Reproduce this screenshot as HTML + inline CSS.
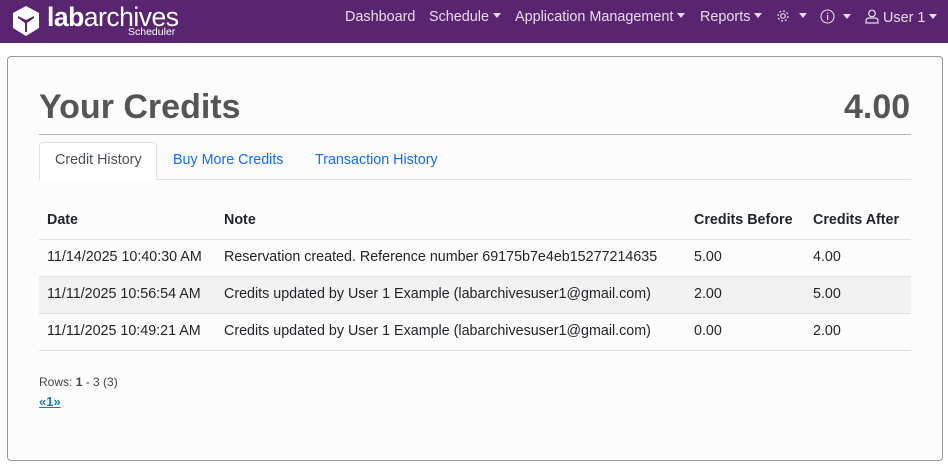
<!DOCTYPE html>
<html><head><style>
*{margin:0;padding:0;box-sizing:border-box}
body{width:948px;height:468px;background:#fff;font-family:"Liberation Sans",Arial,sans-serif;position:relative;overflow:hidden;color:#212529}
.nav{position:absolute;left:0;top:0;width:948px;height:43px;background:#5a2570}
.nav span{position:absolute;top:9px;color:#e6dcea;font-size:14.4px}
.car{display:inline-block;width:0;height:0;border-left:4px solid transparent;border-right:4px solid transparent;border-top:5px solid #e6dcea;vertical-align:3px;margin-left:4px}
.card{position:absolute;left:7px;top:56px;width:936px;height:405px;border:1px solid #999;border-radius:4px;background:#fcfcfc}
.a{position:absolute;white-space:nowrap}
.t{font-size:14.3px;color:#212529}
.line{position:absolute;left:39px;width:872px;height:1px;background:#dee2e6}
</style></head><body>
<div class="nav">
 <svg style="position:absolute;left:11px;top:5px" width="30" height="32" viewBox="0 0 30 32"><path d="M15 1 L28 8 L28 23 L15 31 L2 23 L2 8 Z" fill="#fff"/><path d="M7 11 L15 15 L23 11 L23 13 L16 18 L16 27 L14 27 L14 18 L7 13 Z" fill="#5a2570"/></svg>
 <div class="a" style="left:47px;top:2px;color:#fff;font-size:26.5px;letter-spacing:-0.5px"><b>lab</b>archives</div>
 <div class="a" style="left:128px;top:26px;color:#fff;font-size:10.5px">Scheduler</div>
 <span style="left:345px">Dashboard</span>
 <span style="left:429px">Schedule<i class="car"></i></span>
 <span style="left:515px">Application Management<i class="car"></i></span>
 <span style="left:700px">Reports<i class="car"></i></span>
 <span style="left:776px"><svg width="14" height="14" viewBox="0 0 14 14" style="vertical-align:-2px"><circle cx="7" cy="7" r="2.3" fill="none" stroke="#e6dcea" stroke-width="1.2"/><circle cx="7" cy="7" r="5" fill="none" stroke="#e6dcea" stroke-width="1.2" stroke-dasharray="2 1.9"/></svg><i class="car" style="margin-left:9px"></i></span>
 <span style="left:820px"><svg width="15" height="15" viewBox="0 0 15 15" style="vertical-align:-2px"><circle cx="7.5" cy="7.5" r="6.5" fill="none" stroke="#e6dcea" stroke-width="1.1"/><rect x="7" y="6" width="1.2" height="5" fill="#e6dcea"/><rect x="7" y="3.6" width="1.2" height="1.3" fill="#e6dcea"/></svg><i class="car" style="margin-left:8px"></i></span>
 <span style="left:865px"><svg width="14" height="15" viewBox="0 0 14 15" style="vertical-align:-2px"><circle cx="7" cy="4.5" r="3.3" fill="none" stroke="#e6dcea" stroke-width="1.2"/><path d="M1 14 V12 Q1 9 4 9 H10 Q13 9 13 12 V14 Z" fill="none" stroke="#e6dcea" stroke-width="1.2"/></svg> User 1<i class="car"></i></span>
</div>
<div class="card"></div>
<div class="a" style="left:39px;top:88px;font-size:34px;font-weight:bold;color:#555">Your Credits</div>
<div class="a" style="left:844px;top:88px;font-size:34px;font-weight:bold;color:#555">4.00</div>
<div class="line" style="top:134px;background:#b5b5b5"></div>
<div class="line" style="top:179px"></div>
<div class="a" style="left:39px;top:142px;width:118px;height:38px;background:#fff;border:1px solid #dee2e6;border-bottom:none;border-radius:4px 4px 0 0"></div>
<div class="a t" style="left:55px;top:152px;color:#495057">Credit History</div>
<div class="a t" style="left:173px;top:152px;color:#0d6efd">Buy More Credits</div>
<div class="a t" style="left:315px;top:152px;color:#0d6efd">Transaction History</div>
<div class="a t" style="left:47px;top:212px;font-weight:bold">Date</div>
<div class="a t" style="left:224px;top:212px;font-weight:bold">Note</div>
<div class="a t" style="left:694px;top:212px;font-weight:bold">Credits Before</div>
<div class="a t" style="left:813px;top:212px;font-weight:bold">Credits After</div>
<div class="line" style="top:239px"></div>
<div class="a" style="left:39px;top:277px;width:872px;height:36px;background:#f2f2f2"></div>
<div class="line" style="top:276px"></div>
<div class="line" style="top:313px"></div>
<div class="line" style="top:350px"></div>
<div class="a t" style="left:47px;top:249px">11/14/2025 10:40:30 AM</div>
<div class="a t" style="left:224px;top:249px">Reservation created. Reference number 69175b7e4eb15277214635</div>
<div class="a t" style="left:694px;top:249px">5.00</div>
<div class="a t" style="left:813px;top:249px">4.00</div>
<div class="a t" style="left:47px;top:286px">11/11/2025 10:56:54 AM</div>
<div class="a t" style="left:224px;top:286px">Credits updated by User 1 Example (labarchivesuser1@gmail.com)</div>
<div class="a t" style="left:694px;top:286px">2.00</div>
<div class="a t" style="left:813px;top:286px">5.00</div>
<div class="a t" style="left:47px;top:323px">11/11/2025 10:49:21 AM</div>
<div class="a t" style="left:224px;top:323px">Credits updated by User 1 Example (labarchivesuser1@gmail.com)</div>
<div class="a t" style="left:694px;top:323px">0.00</div>
<div class="a t" style="left:813px;top:323px">2.00</div>
<div class="a" style="left:39px;top:375px;font-size:12px;color:#444">Rows: <b>1</b> - 3 (3)</div>
<div class="a" style="left:39px;top:394px;font-size:13px;color:#1a7bb0;text-decoration:underline;font-weight:bold">«1»</div>
</body></html>
